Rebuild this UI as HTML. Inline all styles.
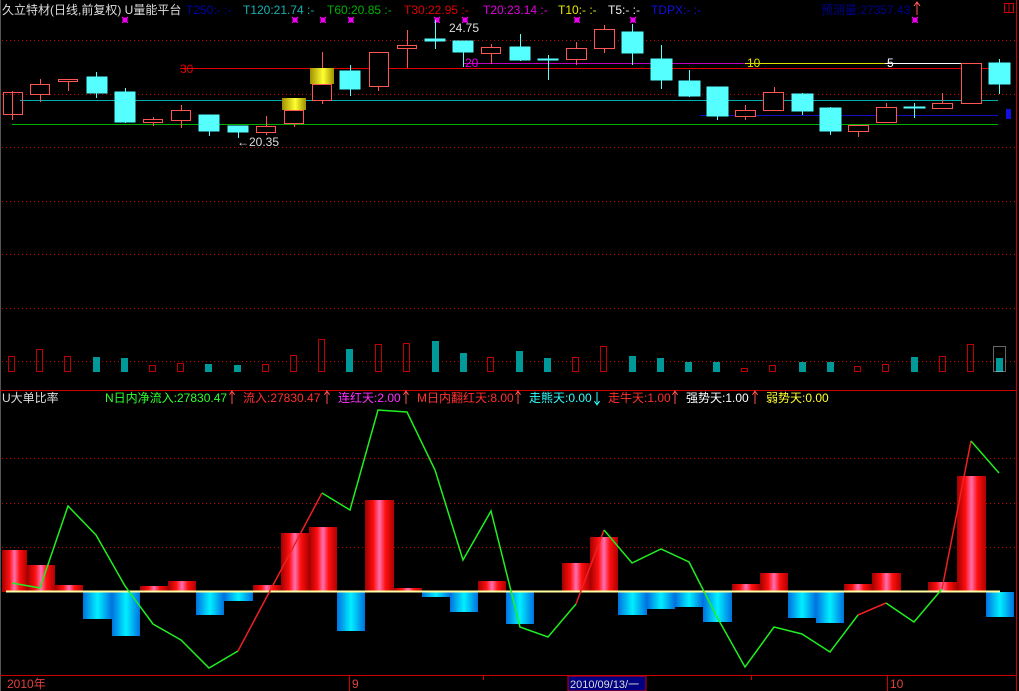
<!DOCTYPE html>
<html><head><meta charset="utf-8"><style>
html,body{margin:0;padding:0;background:#000;width:1019px;height:691px;overflow:hidden}
svg{display:block}
text{font-family:"Liberation Sans","Noto Sans CJK SC",sans-serif;font-size:12px}
</style></head><body>
<svg width="1019" height="691" viewBox="0 0 1019 691" xmlns="http://www.w3.org/2000/svg" shape-rendering="crispEdges">
<rect width="1019" height="691" fill="#000"/>
<line x1="0.5" y1="0" x2="0.5" y2="691" stroke="#555"/>
<line x1="1016.5" y1="0" x2="1016.5" y2="691" stroke="#c00"/>
<g stroke="#c00" stroke-dasharray="1,3">
<line x1="2" y1="40.5" x2="1015" y2="40.5"/><line x1="2" y1="94.5" x2="1015" y2="94.5"/>
<line x1="2" y1="147.5" x2="1015" y2="147.5"/><line x1="2" y1="201.5" x2="1015" y2="201.5"/>
<line x1="2" y1="254.5" x2="1015" y2="254.5"/><line x1="2" y1="308.5" x2="1015" y2="308.5"/>
<line x1="2" y1="361.5" x2="1015" y2="361.5"/>
<line x1="2" y1="458.5" x2="1015" y2="458.5"/><line x1="2" y1="503.5" x2="1015" y2="503.5"/>
<line x1="2" y1="547.5" x2="1015" y2="547.5"/>
</g>
<line x1="0" y1="390.5" x2="1017" y2="390.5" stroke="#c00"/>
<line x1="0" y1="675.5" x2="1017" y2="675.5" stroke="#c00"/>
<text x="2" y="14" fill="#ddd">久立特材(日线,前复权) U量能平台</text>
<text x="186" y="14" fill="#0000a8">T250:- :-</text>
<text x="243" y="14" fill="#1ab0b0">T120:21.74 :-</text>
<text x="327" y="14" fill="#00b000">T60:20.85 :-</text>
<text x="404" y="14" fill="#e00000">T30:22.95 :-</text>
<text x="483" y="14" fill="#e000e0">T20:23.14 :-</text>
<text x="558" y="14" fill="#e8e800">T10:- :-</text>
<text x="608" y="14" fill="#eee">T5:- :-</text>
<text x="651" y="14" fill="#1010e0">TDPX:- :-</text>
<text x="821" y="14" fill="#00008c">预测量:27357.43</text>
<path d="M917 15V3M914 6L917 2L920 6" stroke="#f55" fill="none"/>
<rect x="1004.5" y="3.5" width="9" height="9" fill="none" stroke="#c00"/><line x1="1009" y1="3" x2="1009" y2="13" stroke="#c00"/>
<g stroke="#e0e" fill="#e0e">
<path d="M123 18h4v4h-4zM122 17l6 6M128 17l-6 6"/>
<path d="M293 18h4v4h-4zM292 17l6 6M298 17l-6 6"/>
<path d="M321 18h4v4h-4zM320 17l6 6M326 17l-6 6"/>
<path d="M349 18h4v4h-4zM348 17l6 6M354 17l-6 6"/>
<path d="M435 18h4v4h-4zM434 17l6 6M440 17l-6 6"/>
<path d="M463 18h4v4h-4zM462 17l6 6M468 17l-6 6"/>
<path d="M575 18h4v4h-4zM574 17l6 6M580 17l-6 6"/>
<path d="M631 18h4v4h-4zM630 17l6 6M636 17l-6 6"/>
<path d="M913 18h4v4h-4zM912 17l6 6M918 17l-6 6"/>
</g>
<line x1="180" y1="68.5" x2="1000" y2="68.5" stroke="#e00000"/>
<line x1="463" y1="63.5" x2="745" y2="63.5" stroke="#c000c0"/>
<line x1="745" y1="63.5" x2="885" y2="63.5" stroke="#e0e000"/>
<line x1="885" y1="63.5" x2="965" y2="63.5" stroke="#fff"/>
<line x1="20" y1="100.5" x2="998" y2="100.5" stroke="#00b0b0"/>
<line x1="700" y1="115.5" x2="998" y2="115.5" stroke="#1010c0"/>
<line x1="12" y1="124.5" x2="998" y2="124.5" stroke="#00b000"/>
<text x="180" y="73" fill="#e00000">30</text>
<text x="465" y="67" fill="#e000e0">20</text>
<text x="747" y="67" fill="#e0e000">10</text>
<text x="887" y="67" fill="#fff">5</text>
<text x="449" y="32" fill="#ddd">24.75</text>
<text x="237" y="146" fill="#ddd">←20.35</text>
<rect x="1006" y="109" width="5" height="10" fill="#1010e0"/>
<g stroke="#ff5555" fill="none">
<line x1="12.5" y1="91" x2="12.5" y2="120"/><rect x="3.5" y="92.5" width="19" height="22"/>
<line x1="40.5" y1="79" x2="40.5" y2="102"/><rect x="30.5" y="84.5" width="19" height="10" fill="#000"/>
<line x1="68.5" y1="79" x2="68.5" y2="91"/><rect x="58.5" y="79.5" width="19" height="2" fill="#000"/>
<line x1="153.5" y1="117" x2="153.5" y2="126"/><rect x="143.5" y="119.5" width="19" height="3" fill="#000"/>
<line x1="181.5" y1="105" x2="181.5" y2="128"/><rect x="171.5" y="110.5" width="19" height="10" fill="#000"/>
<line x1="266.5" y1="116" x2="266.5" y2="135"/><rect x="256.5" y="126.5" width="19" height="6" fill="#000"/>
<line x1="294.5" y1="110" x2="294.5" y2="127"/><rect x="284.5" y="110.5" width="19" height="13" fill="#000"/>
<line x1="322.5" y1="52" x2="322.5" y2="104"/><rect x="312.5" y="84.5" width="19" height="16" fill="#000"/>
<line x1="378.5" y1="52" x2="378.5" y2="91"/><rect x="369.5" y="52.5" width="19" height="34" fill="#000"/>
<line x1="407.5" y1="30" x2="407.5" y2="68"/><rect x="397.5" y="45.5" width="19" height="3" fill="#000"/>
<line x1="491.5" y1="44" x2="491.5" y2="64"/><rect x="481.5" y="47.5" width="19" height="6" fill="#000"/>
<line x1="576.5" y1="42" x2="576.5" y2="65"/><rect x="566.5" y="48.5" width="20" height="11" fill="#000"/>
<line x1="604.5" y1="25" x2="604.5" y2="53"/><rect x="594.5" y="29.5" width="20" height="19" fill="#000"/>
<line x1="745.5" y1="105" x2="745.5" y2="120"/><rect x="735.5" y="110.5" width="20" height="6" fill="#000"/>
<line x1="774.5" y1="87" x2="774.5" y2="111"/><rect x="763.5" y="92.5" width="20" height="18" fill="#000"/>
<line x1="858.5" y1="125" x2="858.5" y2="137"/><rect x="848.5" y="125.5" width="20" height="6" fill="#000"/>
<line x1="886.5" y1="103" x2="886.5" y2="123"/><rect x="876.5" y="107.5" width="20" height="15" fill="#000"/>
<line x1="942.5" y1="93" x2="942.5" y2="108"/><rect x="932.5" y="103.5" width="20" height="5" fill="#000"/>
<rect x="961.5" y="63.5" width="20" height="40" fill="#000"/>
</g>
<defs><linearGradient id="gold" x1="0" x2="1"><stop offset="0" stop-color="#a09000"/><stop offset=".55" stop-color="#ffff30"/><stop offset="1" stop-color="#a09000"/></linearGradient>
<linearGradient id="rg" x1="0" x2="1"><stop offset="0" stop-color="#a00000"/><stop offset=".3" stop-color="#ff1010"/><stop offset=".5" stop-color="#ff70b0"/><stop offset=".7" stop-color="#ff1010"/><stop offset="1" stop-color="#b00000"/></linearGradient>
<linearGradient id="bg" x1="0" x2="1"><stop offset="0" stop-color="#0070e0"/><stop offset=".5" stop-color="#00f0ff"/><stop offset="1" stop-color="#0070e0"/></linearGradient></defs>
<rect x="282" y="98" width="24" height="12" fill="url(#gold)"/>
<rect x="310" y="68" width="24" height="16" fill="url(#gold)"/>
<g fill="#55ffff" stroke="#55ffff">
<line x1="96.5" y1="72" x2="96.5" y2="98"/><rect x="87" y="77" width="20" height="16"/>
<line x1="125.5" y1="88" x2="125.5" y2="123"/><rect x="115" y="92" width="20" height="30"/>
<line x1="209.5" y1="115" x2="209.5" y2="136"/><rect x="199" y="115" width="20" height="16"/>
<line x1="238.5" y1="126" x2="238.5" y2="138"/><rect x="228" y="126" width="20" height="6"/>
<line x1="350.5" y1="65" x2="350.5" y2="96"/><rect x="340" y="71" width="20" height="18"/>
<line x1="435.5" y1="20" x2="435.5" y2="49"/><rect x="425" y="39" width="20" height="2"/>
<line x1="463.5" y1="41" x2="463.5" y2="67"/><rect x="453" y="41" width="20" height="11"/>
<line x1="520.5" y1="34" x2="520.5" y2="61"/><rect x="510" y="47" width="20" height="13"/>
<line x1="548.5" y1="55" x2="548.5" y2="80"/><rect x="538" y="59" width="20" height="1"/>
<line x1="632.5" y1="24" x2="632.5" y2="65"/><rect x="622" y="32" width="21" height="21"/>
<line x1="661.5" y1="45" x2="661.5" y2="89"/><rect x="651" y="59" width="21" height="21"/>
<line x1="689.5" y1="70" x2="689.5" y2="97"/><rect x="679" y="81" width="21" height="15"/>
<line x1="717.5" y1="87" x2="717.5" y2="120"/><rect x="707" y="87" width="21" height="29"/>
<line x1="802.5" y1="93" x2="802.5" y2="115"/><rect x="792" y="94" width="21" height="17"/>
<line x1="830.5" y1="107" x2="830.5" y2="135"/><rect x="820" y="108" width="21" height="23"/>
<line x1="914.5" y1="103" x2="914.5" y2="118"/><rect x="904" y="107" width="21" height="1"/>
<line x1="999.5" y1="59" x2="999.5" y2="94"/><rect x="989" y="63" width="21" height="21"/>
</g>
<g fill="none" stroke="#c00000">
<rect x="8.5" y="356.5" width="6" height="15"/><rect x="36.5" y="349.5" width="6" height="22"/><rect x="64.5" y="356.5" width="6" height="15"/>
<rect x="149.5" y="365.5" width="6" height="6"/><rect x="177.5" y="363.5" width="6" height="8"/><rect x="262.5" y="364.5" width="6" height="7"/>
<rect x="290.5" y="355.5" width="6" height="16"/><rect x="318.5" y="339.5" width="6" height="32"/><rect x="375.5" y="344.5" width="6" height="27"/>
<rect x="403.5" y="343.5" width="6" height="28"/><rect x="487.5" y="357.5" width="6" height="14"/><rect x="572.5" y="357.5" width="6" height="14"/>
<rect x="600.5" y="346.5" width="6" height="25"/><rect x="741.5" y="368.5" width="6" height="3"/><rect x="769.5" y="365.5" width="6" height="6"/>
<rect x="854.5" y="366.5" width="6" height="5"/><rect x="882.5" y="364.5" width="6" height="7"/><rect x="939.5" y="356.5" width="6" height="15"/><rect x="967.5" y="344.5" width="6" height="27"/>
</g>
<g fill="#009999">
<rect x="93" y="357" width="7" height="15"/><rect x="121" y="358" width="7" height="14"/><rect x="205" y="364" width="7" height="8"/><rect x="234" y="365" width="7" height="7"/>
<rect x="346" y="349" width="7" height="23"/><rect x="432" y="341" width="7" height="31"/><rect x="460" y="353" width="7" height="19"/><rect x="516" y="351" width="7" height="21"/>
<rect x="544" y="358" width="7" height="14"/><rect x="629" y="356" width="7" height="16"/><rect x="657" y="358" width="7" height="14"/><rect x="685" y="362" width="7" height="10"/>
<rect x="713" y="362" width="7" height="10"/><rect x="799" y="362" width="7" height="10"/><rect x="827" y="362" width="7" height="10"/><rect x="911" y="357" width="7" height="15"/><rect x="996" y="358" width="7" height="14"/>
</g>
<rect x="993.5" y="346.5" width="12" height="25" fill="none" stroke="#ccc" stroke-dasharray="1,1"/>
<text x="2" y="402" fill="#ddd">U大单比率</text>
<text x="105" y="402" fill="#30ff30">N日内净流入:27830.47</text>
<text x="243" y="402" fill="#ff3030">流入:27830.47</text>
<text x="338" y="402" fill="#ff30ff">连红天:2.00</text>
<text x="417" y="402" fill="#ff3030">M日内翻红天:8.00</text>
<text x="529" y="402" fill="#30ffff">走熊天:0.00</text>
<text x="608" y="402" fill="#ff3030">走牛天:1.00</text>
<text x="686" y="402" fill="#fff">强势天:1.00</text>
<text x="766" y="402" fill="#ffff30">弱势天:0.00</text>
<g stroke="#ff5050" fill="none"><path d="M232 404V392M229.5 395L232 391L234.5 395"/><path d="M327 404V392M324.5 395L327 391L329.5 395"/><path d="M406 404V392M403.5 395L406 391L408.5 395"/><path d="M518 404V392M515.5 395L518 391L520.5 395"/><path d="M675 404V392M672.5 395L675 391L677.5 395"/><path d="M755 404V392M752.5 395L755 391L757.5 395"/></g>
<path d="M597 392V404M594.5 401L597 405L599.5 401" stroke="#30ffff" fill="none"/>
<g fill="url(#rg)">
<rect x="2" y="550" width="25" height="42"/><rect x="27" y="565" width="28" height="27"/><rect x="55" y="585" width="28" height="7"/>
<rect x="140" y="586" width="28" height="6"/><rect x="168" y="581" width="28" height="11"/><rect x="253" y="585" width="28" height="7"/>
<rect x="281" y="533" width="28" height="59"/><rect x="309" y="527" width="28" height="65"/><rect x="365" y="500" width="29" height="92"/>
<rect x="394" y="588" width="28" height="4"/><rect x="478" y="581" width="28" height="11"/><rect x="562" y="563" width="28" height="29"/>
<rect x="590" y="537" width="28" height="55"/><rect x="732" y="584" width="28" height="8"/><rect x="760" y="573" width="28" height="19"/>
<rect x="844" y="584" width="28" height="8"/><rect x="872" y="573" width="29" height="19"/><rect x="928" y="582" width="29" height="10"/><rect x="957" y="476" width="29" height="116"/>
</g>
<g fill="url(#bg)">
<rect x="83" y="592" width="29" height="27"/><rect x="112" y="592" width="28" height="44"/><rect x="196" y="592" width="28" height="23"/>
<rect x="224" y="592" width="29" height="9"/><rect x="337" y="592" width="28" height="39"/><rect x="422" y="592" width="28" height="5"/>
<rect x="450" y="592" width="28" height="20"/><rect x="506" y="592" width="28" height="32"/><rect x="618" y="592" width="29" height="23"/>
<rect x="647" y="592" width="28" height="17"/><rect x="675" y="592" width="28" height="15"/><rect x="703" y="592" width="29" height="30"/>
<rect x="788" y="592" width="28" height="26"/><rect x="816" y="592" width="28" height="31"/><rect x="986" y="592" width="28" height="25"/>
</g>
<line x1="6" y1="591.5" x2="1000" y2="591.5" stroke="#ffffa0" stroke-width="2"/>
<g fill="none" stroke-width="1.5" shape-rendering="auto">
<polyline stroke="#20ee20" points="12,583 40,588 68,506 96,535 125,586 153,624 181,640 209,668 238,651"/>
<polyline stroke="#ee2020" points="238,651 322,493"/>
<polyline stroke="#20ee20" points="322,493 350,510 378,410 407,412 435,470 463,560 491,511 520,627 548,637 576,604"/>
<polyline stroke="#ee2020" points="576,604 604,530"/>
<polyline stroke="#20ee20" points="604,530 632,563 661,549 689,562 717,617 745,667 774,627 802,634 830,652 858,615"/>
<polyline stroke="#ee2020" points="858,615 886,603"/>
<polyline stroke="#20ee20" points="886,603 914,622 942,589"/>
<polyline stroke="#ee2020" points="942,589 971,441"/>
<polyline stroke="#20ee20" points="971,441 999,473"/>
</g>
<g stroke="#c00"><line x1="349.5" y1="676" x2="349.5" y2="691"/><line x1="483.5" y1="676" x2="483.5" y2="680"/><line x1="887.5" y1="676" x2="887.5" y2="691"/><line x1="751.5" y1="676" x2="751.5" y2="680"/></g>
<rect x="568" y="676" width="78" height="15" fill="#000080" stroke="#c00"/>
<text x="7" y="688" fill="#e04040">2010年</text>
<text x="352" y="688" fill="#e04040">9</text>
<text x="570" y="688" fill="#ddd" style="font-size:11px">2010/09/13/一</text>
<text x="890" y="688" fill="#e04040">10</text>
</svg>
</body></html>
